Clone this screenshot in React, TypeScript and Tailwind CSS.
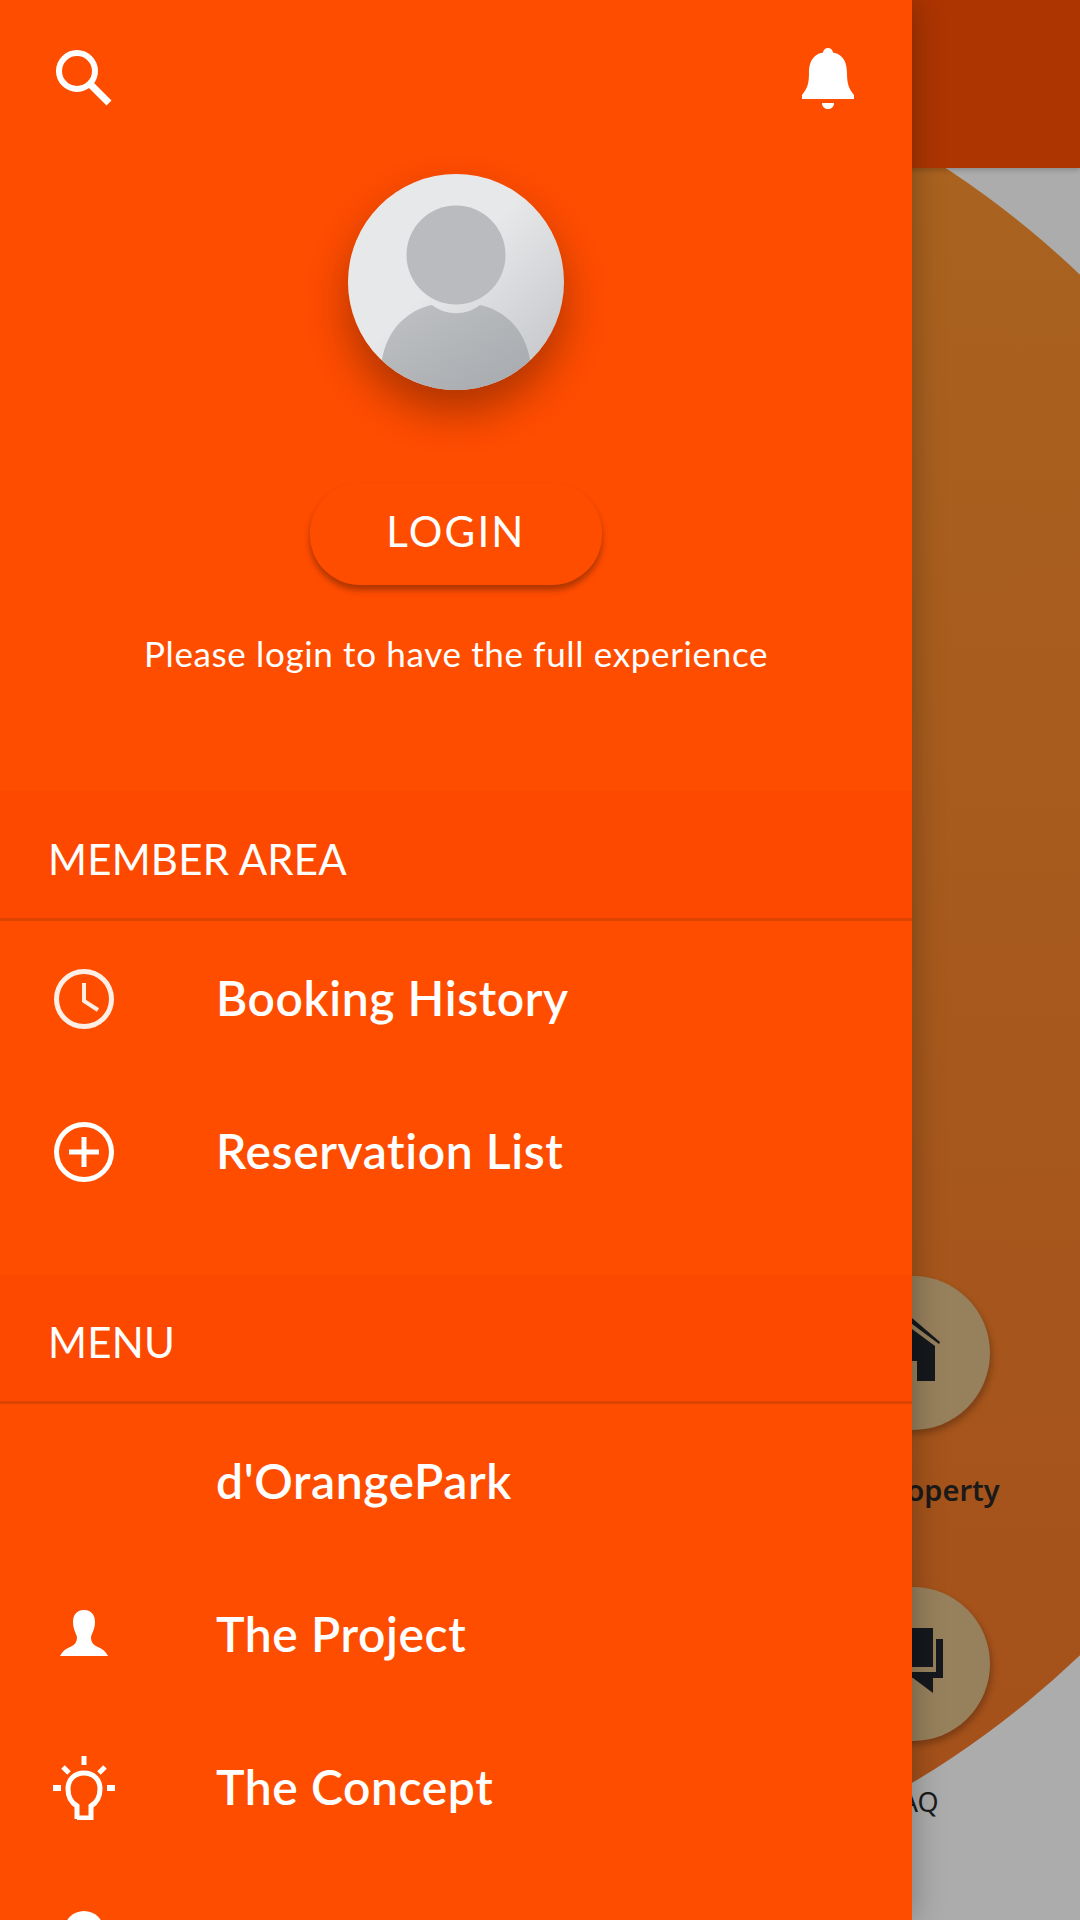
import React from 'react';

const SearchIcon = () => (
  <svg width="64" height="64" viewBox="0 0 64 64" fill="none" stroke="white" className="block">
    <circle cx="25" cy="25" r="18" strokeWidth="6" />
    <path d="M38 38 L57 57" strokeWidth="7" />
  </svg>
);

const BellIcon = () => (
  <svg width="56" height="64" viewBox="0 0 56 64" fill="white" className="block">
    <circle cx="28" cy="7" r="5" />
    <path d="M28 6 C14 6 9 15 9 27 C9 38 7 43 2 49 L2 53 L54 53 L54 49 C49 43 47 38 47 27 C47 15 42 6 28 6 Z" />
    <path d="M22 57 L34 57 C34 65 22 65 22 57 Z" />
  </svg>
);

const ClockIcon = () => (
  <svg width="64" height="64" viewBox="0 0 64 64" fill="none" stroke="#ffeee6" strokeWidth="5" className="block">
    <circle cx="32" cy="32" r="27.5" />
    <path d="M32 16 V34 L46 43" strokeWidth="4" />
  </svg>
);

const PlusIcon = () => (
  <svg width="64" height="64" viewBox="0 0 64 64" fill="none" stroke="white" strokeWidth="5" className="block">
    <circle cx="32" cy="32" r="27.5" />
    <path d="M17 32 H47 M32 17 V47" />
  </svg>
);

const PersonIcon = () => (
  <svg width="64" height="64" viewBox="0 0 64 64" fill="white" className="block">
    <path d="M32 7 C24 7 21 13 21 19 C21 26 24 30 25 34 C25 39 23 42 18 44 C13 46 10 49 8 53 L56 53 C54 49 51 46 46 44 C41 42 39 39 39 34 C40 30 43 26 43 19 C43 13 40 7 32 7 Z" />
  </svg>
);

const BulbIcon = () => (
  <svg width="64" height="64" viewBox="0 0 64 64" fill="none" stroke="white" className="block">
    <path d="M32 0 V9 M11 11 L17 17 M53 11 L47 17" strokeWidth="5" />
    <path d="M1 32 H9 M55 32 H63" strokeWidth="6" />
    <path d="M25 63 V50 C20 47 16 41 16 33 C16 23 23 17 32 17 C41 17 48 23 48 33 C48 41 44 47 39 50 V62 H25 Z" strokeWidth="5" />
  </svg>
);

const HeadIcon = () => (
  <svg width="64" height="64" viewBox="0 0 64 64" fill="white" className="block">
    <circle cx="32" cy="22" r="20" />
  </svg>
);

const Avatar = () => (
  <svg width="216" height="216" viewBox="0 0 216 216" className="block">
    <defs>
      <linearGradient id="face" x1="0.45" y1="0.45" x2="1" y2="1">
        <stop offset="0" stopColor="#e6e8ea" />
        <stop offset="1" stopColor="#bfc1c4" />
      </linearGradient>
      <linearGradient id="figure" x1="0" y1="0" x2="1" y2="1">
        <stop offset="0" stopColor="#bfc1c4" />
        <stop offset="1" stopColor="#a6a9ad" />
      </linearGradient>
      <clipPath id="disc">
        <circle cx="108" cy="108" r="108" />
      </clipPath>
    </defs>
    <g clipPath="url(#disc)">
      <rect width="216" height="216" fill="url(#face)" />
      <path d="M34 216 V186 C39 155 60 136 84 131 C98 142 118 142 132 131 C156 136 177 155 182 186 V216 Z" fill="url(#figure)" />
      <circle cx="108" cy="81" r="49.5" fill="#b9bbbe" />
    </g>
  </svg>
);

const SectionHeader: React.FC<{ title: string }> = ({ title }) => (
  <div className="h-[130px] shrink-0 bg-[#fd4800] border-b-[3px] border-[#dd4302] flex items-end pb-[35px] pl-[48px]">
    <span className="text-[42px] leading-[48px] tracking-[0.2px] text-white">{title}</span>
  </div>
);

const MenuRow: React.FC<{ icon?: React.ReactNode; label?: string }> = ({ icon, label }) => (
  <div className="h-[153px] flex items-center shrink-0">
    <div className="w-[216px] pl-[52px] pt-[3px] shrink-0">{icon ?? <div className="w-16 h-16" />}</div>
    {label && <span className="text-[48px] leading-[56px] tracking-[0.6px] font-semibold text-white">{label}</span>}
  </div>
);

const Backdrop = () => (
  <div className="absolute inset-0 isolate flex flex-col bg-[#acacac] overflow-hidden">
    <div className="h-[168px] shrink-0 bg-[#ad3502] relative z-10 shadow-[0_2px_5px_rgba(0,0,0,0.2)]" />
    <div className="absolute left-[-530px] top-[12px] w-[1906px] h-[1906px] rounded-full bg-gradient-to-b from-[#aa6420] to-[#a44f1a]" />
    <div className="absolute left-[836px] top-[1276px] w-[154px] h-[154px] rounded-full bg-[#97805c] shadow-[2px_4px_6px_rgba(0,0,0,0.25)]" />
    <svg className="absolute left-[880px] top-[1300px]" width="70" height="90" viewBox="0 0 70 90" fill="#15181c">
      <path d="M0 4 L32 18 L60 42 L59 44 L32 24 L0 10 Z" />
      <path d="M0 26 L32 29 L55 46 V81 H37 V61 H0 Z" />
    </svg>
    <div className="absolute left-[836px] top-[1587px] w-[154px] h-[154px] rounded-full bg-[#97805c] shadow-[2px_4px_6px_rgba(0,0,0,0.25)]" />
    <svg className="absolute left-[880px] top-[1620px]" width="70" height="80" viewBox="0 0 70 80" fill="#15181c">
      <path d="M56 19 H63 V58 H53 V73 L33 58 H10 V52 H56 Z" />
      <path d="M10 8 H53 V47 H10 Z" />
    </svg>
    <div className="absolute left-[813px] top-[1472px] w-[200px] text-center text-[29px] leading-[36px] font-semibold text-[#1b1a18] font-['Noto_Sans',sans-serif]">
      My Property
    </div>
    <div className="absolute left-[813px] top-[1784px] w-[200px] text-center text-[27px] leading-[36px] text-[#1b1b1b] font-['Noto_Sans',sans-serif]">
      FAQ
    </div>
  </div>
);

export default function App() {
  return (
    <div className="relative w-[1080px] h-[1920px] overflow-hidden font-['Lato',sans-serif]">
      <Backdrop />

      <div className="relative w-[912px] h-[1920px] bg-[#ff4d00] shadow-[0_0_30px_rgba(0,0,0,0.3)] flex flex-col">
        {/* Profile */}
        <div className="h-[791px] shrink-0 flex flex-col">
          <div className="flex items-start justify-between pl-[52px] pr-[56px] pt-[46px] h-[174px] shrink-0">
            <SearchIcon />
            <BellIcon />
          </div>
          <div className="flex flex-col items-center">
            <div className="rounded-full shadow-[0_22px_44px_rgba(60,20,0,0.42)]">
              <Avatar />
            </div>
            <button className="mt-[93px] w-[292px] h-[102px] pb-[6px] rounded-[50px] bg-[#ff4d00] shadow-[0_5px_6px_rgba(70,25,0,0.45)] text-[42px] tracking-[2.2px] text-white">
              LOGIN
            </button>
            <p className="mt-[46px] text-[35px] leading-[44px] tracking-[0.65px] text-white">Please login to have the full experience</p>
          </div>
        </div>

        <SectionHeader title="MEMBER AREA" />
        <MenuRow icon={<ClockIcon />} label="Booking History" />
        <MenuRow icon={<PlusIcon />} label="Reservation List" />
        <div className="h-[47px] shrink-0" />

        <SectionHeader title="MENU" />
        <MenuRow label="d'OrangePark" />
        <MenuRow icon={<PersonIcon />} label="The Project" />
        <MenuRow icon={<BulbIcon />} label="The Concept" />
        <MenuRow icon={<HeadIcon />} />
      </div>
    </div>
  );
}
